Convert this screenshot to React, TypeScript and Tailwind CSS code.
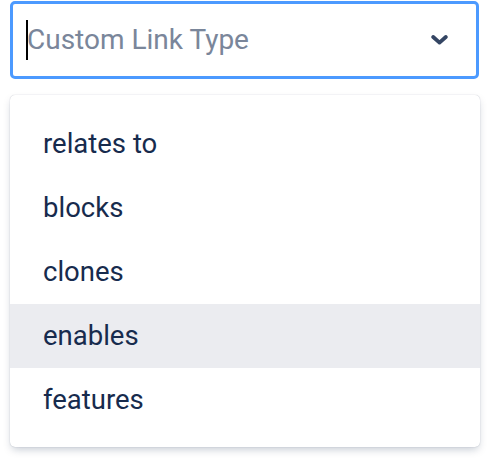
import React from "react";

const items = ["relates to", "blocks", "clones", "enables", "features"];

export default function App() {
  return (
    <div
      className="w-[490px] h-[464px] bg-white"
      style={{ fontFamily: "Roboto, 'Noto Sans', sans-serif" }}
    >
      <div className="pl-[10px] pr-[11px] pt-px">
        <div className="h-[78px] border-[3px] border-[#4c9aff] rounded-[5px] flex items-center pl-[13px] pr-[28px] bg-white">
          <span className="w-[2px] h-[40px] bg-black mr-[-1px]" />
          <span className="flex-1 text-[28px] text-[#7a869a] leading-none">Custom Link Type</span>
          <svg width="17" height="10" viewBox="0 0 17 10" className="block">
            <path d="M2.2 2 L8.5 7.6 L14.8 2" fill="none" stroke="#344563" strokeWidth="3.8" strokeLinecap="round" strokeLinejoin="round" />
          </svg>
        </div>
      </div>
      <div className="px-[10px] pt-[16px]">
        <div className="bg-white rounded-[5px] shadow-[0_4px_8px_-2px_rgba(9,30,66,0.25),0_0_1px_rgba(9,30,66,0.31)] pt-[17px] pb-[15px]">
          {items.map((it) => (
            <div
              key={it}
              className={`h-[64px] flex items-center pl-[33px] text-[27.5px] text-[#172b4d] ${it === "enables" ? "bg-[#ebecf0]" : ""}`}
            >
              {it}
            </div>
          ))}
        </div>
      </div>
    </div>
  );
}
